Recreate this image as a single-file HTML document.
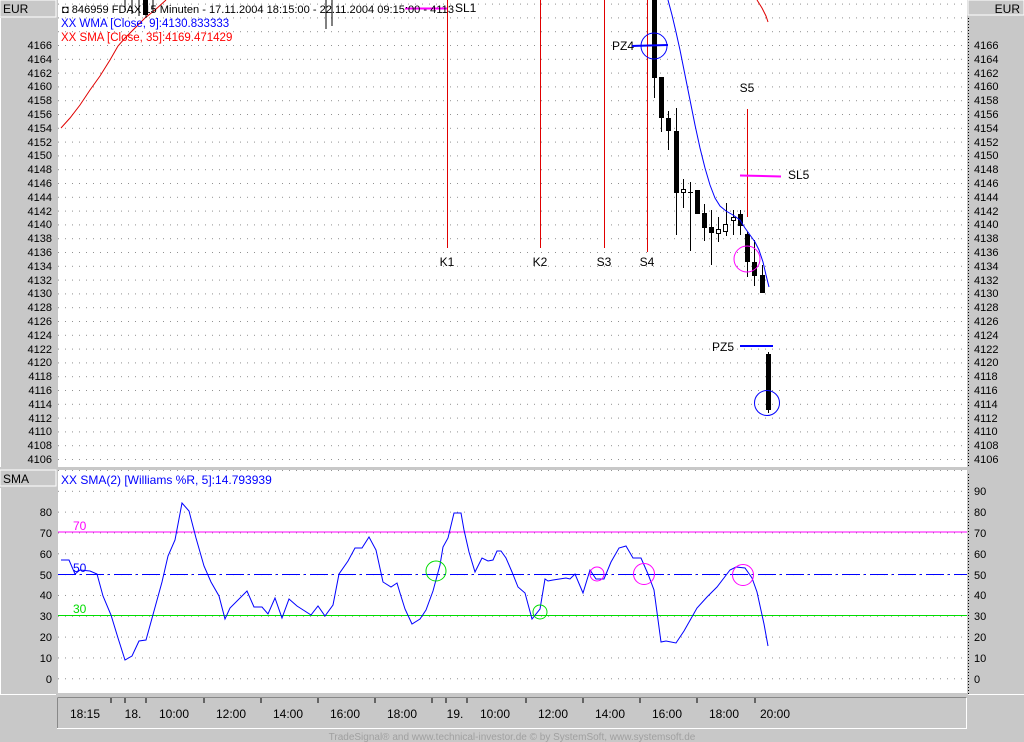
<!DOCTYPE html>
<html><head><meta charset="utf-8"><style>
html,body{margin:0;padding:0;background:#c8c8c8;}
svg{display:block;font-family:"Liberation Sans",sans-serif;}
</style></head><body>
<svg width="1024" height="742" viewBox="0 0 1024 742" xmlns="http://www.w3.org/2000/svg">
<defs>
<pattern id="g1" x="58" y="3.6" width="7" height="13.8" patternUnits="userSpaceOnUse"><rect x="0" y="0" width="1" height="1" fill="#909090"/></pattern>
<pattern id="g2" x="58" y="469.97" width="7" height="20.83" patternUnits="userSpaceOnUse"><rect x="0" y="0" width="1" height="1" fill="#909090"/></pattern>
<pattern id="vd" x="0" y="0" width="2" height="3" patternUnits="userSpaceOnUse"><rect x="0" y="0" width="1" height="1" fill="#000"/></pattern>
</defs>
<rect width="1024" height="742" fill="#c8c8c8"/>
<rect x="58" y="0" width="909" height="467" fill="#fff"/>
<rect x="58" y="0" width="909" height="467" fill="url(#g1)"/>
<rect x="58" y="470" width="909" height="223" fill="#fff"/>
<rect x="58" y="470" width="909" height="223" fill="url(#g2)"/>
<!-- left axis -->
<rect x="0" y="0" width="56" height="17" fill="#c8c8c8" stroke="#fff" stroke-width="1"/>
<text x="3" y="13" font-size="12">EUR</text>
<line x1="0.5" y1="18" x2="0.5" y2="467" stroke="#fff"/>
<rect x="55" y="18" width="1" height="449" fill="url(#vd)"/>
<rect x="0" y="470" width="56" height="16" fill="#c8c8c8" stroke="#fff"/>
<text x="3" y="483" font-size="12">SMA</text>
<line x1="0.5" y1="488" x2="0.5" y2="694" stroke="#fff"/>
<line x1="0" y1="694.5" x2="56" y2="694.5" stroke="#fff"/>
<rect x="55" y="488" width="1" height="206" fill="url(#vd)"/>
<!-- right axis -->
<rect x="968" y="0" width="56" height="15" fill="#c8c8c8" stroke="#fff"/>
<text x="1020" y="13" font-size="12" text-anchor="end">EUR</text>
<rect x="968" y="18" width="1" height="449" fill="url(#vd)"/>
<rect x="968" y="472" width="1" height="222" fill="url(#vd)"/>
<line x1="968" y1="694.5" x2="1024" y2="694.5" stroke="#fff"/>
<g font-size="11" fill="#000">
<g text-anchor="end">
<text x="52" y="49">4166</text><text x="52" y="63">4164</text><text x="52" y="77">4162</text><text x="52" y="90">4160</text><text x="52" y="104">4158</text><text x="52" y="118">4156</text><text x="52" y="132">4154</text><text x="52" y="146">4152</text><text x="52" y="159">4150</text><text x="52" y="173">4148</text><text x="52" y="187">4146</text><text x="52" y="201">4144</text><text x="52" y="215">4142</text><text x="52" y="228">4140</text><text x="52" y="242">4138</text><text x="52" y="256">4136</text><text x="52" y="270">4134</text><text x="52" y="284">4132</text><text x="52" y="297">4130</text><text x="52" y="311">4128</text><text x="52" y="325">4126</text><text x="52" y="339">4124</text><text x="52" y="353">4122</text><text x="52" y="366">4120</text><text x="52" y="380">4118</text><text x="52" y="394">4116</text><text x="52" y="408">4114</text><text x="52" y="422">4112</text><text x="52" y="435">4110</text><text x="52" y="449">4108</text><text x="52" y="463">4106</text>
<text x="52" y="516">80</text><text x="52" y="537">70</text><text x="52" y="558">60</text><text x="52" y="579">50</text><text x="52" y="599">40</text><text x="52" y="620">30</text><text x="52" y="641">20</text><text x="52" y="662">10</text><text x="52" y="683">0</text>
</g>
<g>
<text x="974" y="49">4166</text><text x="974" y="63">4164</text><text x="974" y="77">4162</text><text x="974" y="90">4160</text><text x="974" y="104">4158</text><text x="974" y="118">4156</text><text x="974" y="132">4154</text><text x="974" y="146">4152</text><text x="974" y="159">4150</text><text x="974" y="173">4148</text><text x="974" y="187">4146</text><text x="974" y="201">4144</text><text x="974" y="215">4142</text><text x="974" y="228">4140</text><text x="974" y="242">4138</text><text x="974" y="256">4136</text><text x="974" y="270">4134</text><text x="974" y="284">4132</text><text x="974" y="297">4130</text><text x="974" y="311">4128</text><text x="974" y="325">4126</text><text x="974" y="339">4124</text><text x="974" y="353">4122</text><text x="974" y="366">4120</text><text x="974" y="380">4118</text><text x="974" y="394">4116</text><text x="974" y="408">4114</text><text x="974" y="422">4112</text><text x="974" y="435">4110</text><text x="974" y="449">4108</text><text x="974" y="463">4106</text>
<text x="974" y="495">90</text><text x="974" y="516">80</text><text x="974" y="537">70</text><text x="974" y="558">60</text><text x="974" y="579">50</text><text x="974" y="599">40</text><text x="974" y="620">30</text><text x="974" y="641">20</text><text x="974" y="662">10</text><text x="974" y="683">0</text>
</g>
</g>
<!-- time axis -->
<rect x="57.5" y="697.5" width="909" height="31" fill="#c8c8c8" stroke="#fff"/>
<line x1="57.5" y1="697.5" x2="966.5" y2="697.5" stroke="#888"/>
<line x1="57.5" y1="697.5" x2="57.5" y2="728" stroke="#888"/>
<g stroke="#000"><path d="M111 698v5M125 698v5M146 698v5M204 698v5M261 698v5M318 698v5M375 698v5M432 698v5M446 698v5M467 698v5M526 698v5M583 698v5M640 698v5M697 698v5M755 698v5"/></g>
<g font-size="12" text-anchor="middle">
<text x="85" y="718">18:15</text><text x="133" y="718">18.</text><text x="174" y="718">10:00</text><text x="231" y="718">12:00</text><text x="288" y="718">14:00</text><text x="345" y="718">16:00</text><text x="402" y="718">18:00</text><text x="455" y="718">19.</text><text x="495" y="718">10:00</text><text x="553" y="718">12:00</text><text x="610" y="718">14:00</text><text x="667" y="718">16:00</text><text x="724" y="718">18:00</text><text x="775" y="718">20:00</text>
</g>
<text x="512" y="740" font-size="10" fill="#a0a0a0" text-anchor="middle">TradeSignal® and www.technical-investor.de © by SystemSoft, www.systemsoft.de</text>

<!-- upper chart content -->
<g stroke="#e00000" stroke-width="1">
<line x1="447.5" y1="0" x2="447.5" y2="248"/>
<line x1="540.5" y1="0" x2="540.5" y2="248"/>
<line x1="604.5" y1="0" x2="604.5" y2="248"/>
<line x1="647.5" y1="0" x2="647.5" y2="252"/>
<line x1="747.5" y1="109" x2="747.5" y2="217"/>
</g>
<polyline fill="none" stroke="#e00000" points="61,128 70,118 80,105 90,90 100,76 110,60 118,46 125,38 135,28 145,18 155,10 166,0"/>
<polyline fill="none" stroke="#e00000" points="757,0 762,8 766,16 768,22"/>
<g stroke="#000"><path d="M125 0v10M132 0v14M139 0v16M146 0v18M153 0v13M326 0v29M332 0v26"/></g>
<rect x="143" y="0" width="5" height="15" fill="#000"/>
<line x1="405" y1="8.5" x2="447" y2="8.5" stroke="#ff00ff" stroke-width="2"/>
<g font-size="12">
<text x="62" y="13" font-size="11" textLength="392" lengthAdjust="spacingAndGlyphs">◘ 846959 FDAX 15 Minuten - 17.11.2004 18:15:00 - 22.11.2004 09:15:00 - 4113</text>
<text x="455" y="12">SL1</text>
<text x="61" y="27" fill="#0000ff" font-size="11.5">XX WMA [Close, 9]:4130.833333</text>
<text x="61" y="41" fill="#ff0000" font-size="11.5">XX SMA [Close, 35]:4169.471429</text>
<text x="447" y="266" text-anchor="middle">K1</text>
<text x="540" y="266" text-anchor="middle">K2</text>
<text x="604" y="266" text-anchor="middle">S3</text>
<text x="647" y="266" text-anchor="middle">S4</text>
<text x="747" y="92" text-anchor="middle">S5</text>
<text x="788" y="179">SL5</text>
<text x="612" y="50">PZ4</text>
<text x="712" y="351">PZ5</text>
</g>
<g stroke="#000" stroke-width="1">
<path d="M654.5 0v98M661.5 77v55M668.5 111v39M676.5 108v127M683.5 179v29M690.5 182v69M697.5 190v24M704.5 204v37M711.5 210v55M718.5 217v25M726.5 203v33M733.5 210v25M740.5 210v25M747.5 232v45M754.5 240v46M762.5 265v28M768.5 352v61"/>
</g>
<g fill="#000">
<rect x="652" y="0" width="5" height="78"/>
<rect x="659" y="77" width="5" height="41"/>
<rect x="666" y="118" width="5" height="13"/>
<rect x="674" y="131" width="5" height="62"/>
<rect x="688" y="192" width="5" height="1"/>
<rect x="695" y="190" width="5" height="24"/>
<rect x="702" y="213" width="5" height="15"/>
<rect x="709" y="227" width="5" height="6"/>
<rect x="738" y="214" width="5" height="12"/>
<rect x="745" y="234" width="5" height="28"/>
<rect x="752" y="262" width="5" height="14"/>
<rect x="760" y="275" width="5" height="18"/>
<rect x="766" y="354" width="5" height="56"/>
</g>
<g fill="#fff" stroke="#000">
<rect x="681.5" y="189.5" width="4" height="3"/>
<rect x="716.5" y="229.5" width="4" height="4"/>
<rect x="723.5" y="224.5" width="4" height="7"/>
<rect x="731.5" y="217.5" width="4" height="3"/>
</g>
<polyline fill="none" stroke="#0000ff" points="668,0 672,15 676,32 680,50 685,75 690,100 695,125 700,148 705,168 710,185 715,198 720,206 726,211 733,215 740,220 745,228 750,235 755,242 759,250 763,262 766,275 769,287"/>
<line x1="632" y1="46" x2="668" y2="45" stroke="#0000ff" stroke-width="2"/>
<circle cx="654" cy="46" r="13" fill="none" stroke="#0000ff"/>
<line x1="740" y1="175.5" x2="781" y2="176.5" stroke="#ff00ff" stroke-width="2"/>
<circle cx="747" cy="259" r="13" fill="none" stroke="#ff00ff"/>
<line x1="740" y1="346" x2="773" y2="346" stroke="#0000ff" stroke-width="2"/>
<circle cx="767" cy="403" r="12.5" fill="none" stroke="#0000ff"/>

<!-- lower panel -->
<line x1="58" y1="532" x2="967" y2="532" stroke="#ff00ff"/>
<line x1="58" y1="615.5" x2="967" y2="615.5" stroke="#00dd00"/>
<line x1="58" y1="574.5" x2="967" y2="574.5" stroke="#0000ff" stroke-dasharray="18 4 2 4"/>
<text x="73" y="530" font-size="12" fill="#ff00ff">70</text>
<text x="73" y="572" font-size="12" fill="#0000ff">50</text>
<text x="73" y="613" font-size="12" fill="#00dd00">30</text>
<text x="61" y="484" font-size="12" fill="#0000ff">XX SMA(2) [Williams %R, 5]:14.793939</text>
<polyline fill="none" stroke="#0000ff" points="61,560 69,560 75,574 80,570 90,571 97,574 103,596 111,615 118,638 125,660 132,656 139,641 146,640 154,611 162,582 168,556 175,540 182,503 189,511 196,538 204,566 211,582 219,596 225,619 230,608 247,591 254,607 262,607 268,614 275,598 282,618 289,599 297,606 311,615 318,606 325,616 333,605 339,574 348,561 355,548 362,548 369,537 376,550 383,582 391,587 397,583 400,593 405,609 412,624 420,619 426,610 433,591 440,565 443,547 448,538 454,513 461,513 464,530 469,552 475,572 482,558 488,561 493,560 497,551 501,551 506,558 512,572 518,587 525,593 532,619 540,609 545,579 548,581 553,580 566,578 570,579 575,574 583,593 590,570 596,579 604,579 611,562 619,548 626,546 633,558 641,558 648,574 654,590 661,642 666,641 676,643 684,631 697,608 707,597 717,587 730,570 736,567 745,568 752,578 757,592 764,624 768,646"/>
<g fill="none">
<circle cx="436" cy="571" r="10" stroke="#00dd00"/>
<circle cx="540" cy="612" r="7" stroke="#00dd00"/>
<circle cx="597" cy="574" r="7" stroke="#ff00ff"/>
<circle cx="644" cy="574" r="10.5" stroke="#ff00ff"/>
<circle cx="743" cy="575" r="10.5" stroke="#ff00ff"/>
</g>
</svg>
</body></html>
